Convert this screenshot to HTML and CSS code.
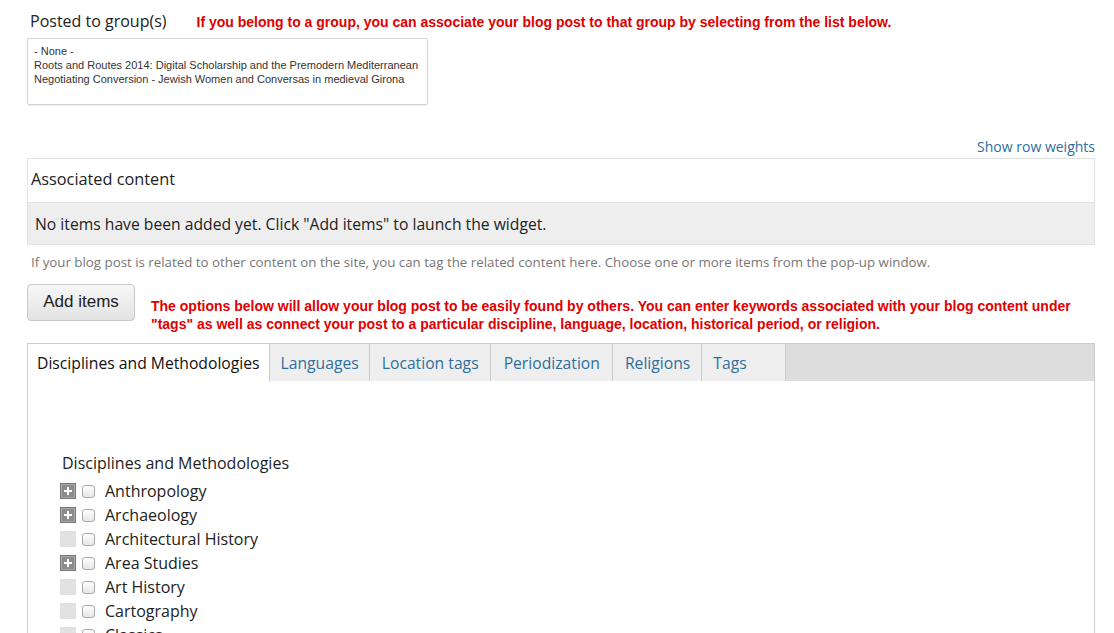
FILE: index.html
```html
<!DOCTYPE html>
<html lang="en">
<head>
    <meta charset="UTF-8">
    <title>Blog post</title>
    <link rel="stylesheet" href="styles.css">
</head>
<body>
    <div class="group-field">
        <div class="group-label">
            <label>Posted to group(s)</label>
            <span class="note">If you belong to a group, you can associate your blog post to that group by selecting from the list below.</span>
        </div>
        <div class="group-select">
            <div>- None -</div>
            <div>Roots and Routes 2014: Digital Scholarship and the Premodern Mediterranean</div>
            <div>Negotiating Conversion - Jewish Women and Conversas in medieval Girona</div>
        </div>
    </div>

    <div class="weights"><a href="#">Show row weights</a></div>

    <table class="assoc">
        <tr><th>Associated content</th></tr>
        <tr><td>No items have been added yet. Click "Add items" to launch the widget.</td></tr>
    </table>
    <div class="description">If your blog post is related to other content on the site, you can tag the related content here. Choose one or more items from the pop-up window.</div>

    <div class="add-row">
        <button class="btn">Add items</button>
        <p class="note">The options below will allow your blog post to be easily found by others. You can enter keywords associated with your blog content under "tags" as well as connect your post to a particular discipline, language, location, historical period, or religion.</p>
    </div>

    <div class="tabs">
        <ul class="tab-list">
            <li class="active">Disciplines and Methodologies</li>
            <li class="narrow">Languages</li>
            <li>Location tags</li>
            <li class="wide">Periodization</li>
            <li>Religions</li>
            <li class="last">Tags</li>
        </ul>
        <div class="tab-panel">
            <h3>Disciplines and Methodologies</h3>
            <ul class="tree">
                <li><span class="toggle plus"></span><input type="checkbox"><label>Anthropology</label></li>
                <li><span class="toggle plus"></span><input type="checkbox"><label>Archaeology</label></li>
                <li><span class="toggle"></span><input type="checkbox"><label>Architectural History</label></li>
                <li><span class="toggle plus"></span><input type="checkbox"><label>Area Studies</label></li>
                <li><span class="toggle"></span><input type="checkbox"><label>Art History</label></li>
                <li><span class="toggle"></span><input type="checkbox"><label>Cartography</label></li>
                <li><span class="toggle"></span><input type="checkbox"><label>Classics</label></li>
            </ul>
        </div>
    </div>
</body>
</html>
```

FILE: styles.css
```css
body {
    margin: 0;
    padding: 0 19px 0 27px;
    font-family: "Open Sans", sans-serif;
    font-size: 16px;
    color: #222;
    background: #fff;
    overflow: hidden;
}

.note {
    font-family: "Liberation Sans", Arial, sans-serif;
    font-weight: bold;
    color: #e00000;
    font-size: 14px;
}

/* groups */
.group-field {
    padding-top: 10px;
}
.group-label {
    display: flex;
    align-items: baseline;
    gap: 30px;
    padding-left: 3px;
    height: 28px;
}
.group-label label {
    font-size: 16px;
}
.group-select {
    width: 387px;
    height: 55px;
    padding: 5px 6px;
    border: 1px solid #d4d4d4;
    border-radius: 2px;
    box-shadow: 0 1px 1px rgba(0, 0, 0, 0.08);
    font-family: "Liberation Sans", Arial, sans-serif;
    font-size: 11px;
    line-height: 14px;
    color: #333;
}

.weights {
    text-align: right;
    margin-top: 32px;
    height: 21px;
    font-size: 14px;
}
.weights a {
    color: #2e6e9e;
    text-decoration: none;
}

/* associated content */
.assoc {
    width: 100%;
    border-collapse: collapse;
    border: 1px solid #e2e2e2;
}
.assoc th {
    text-align: left;
    font-weight: normal;
    font-size: 16.3px;
    height: 39px;
    padding: 0 3px 4px;
    border-bottom: 1px solid #e2e2e2;
}
.assoc td {
    background: #eee;
    font-size: 15.7px;
    height: 41px;
    padding: 0 7px;
}
.description {
    font-size: 13.3px;
    color: #777;
    padding: 8px 4px 0;
    height: 31px;
}

.add-row {
    display: flex;
    gap: 16px;
}
.btn {
    font-family: "Liberation Sans", Arial, sans-serif;
    font-size: 17px;
    width: 108px;
    height: 37px;
    border: 1px solid #c8c8c8;
    border-radius: 4px;
    background: linear-gradient(#f7f7f7, #e3e3e3);
    color: #222;
    padding: 0 0 1px;
    flex-shrink: 0;
}
.add-row .note {
    margin: 13px 0 0;
    max-width: 935px;
    line-height: 18px;
}

/* tabs */
.tabs {
    margin-top: 10px;
}
.tab-list {
    display: flex;
    list-style: none;
    margin: 0;
    padding: 0;
    background: #ddd;
    border: 1px solid #ccc;
    border-bottom: none;
    height: 37px;
}
.tab-list li {
    background: #eee;
    color: #2e6e9e;
    border-right: 1px solid #ccc;
    padding: 0 11px 0 12px;
    line-height: 38px;
    font-size: 15.7px;
}
.tab-list li.narrow {
    padding: 0 10px 0 11px;
}
.tab-list li.wide {
    padding: 0 12px 0 13px;
}
.tab-list li.active {
    background: #fff;
    color: #111;
    padding: 0 9px;
    height: 38px;
}
.tab-list li.last {
    padding: 0 38px 0 11px;
}
.tab-panel {
    border-left: 1px solid #ccc;
    border-right: 1px solid #ccc;
    padding: 71px 32px 0;
    height: 400px;
}
.tab-panel h3 {
    font-weight: normal;
    font-size: 16px;
    margin: 0 0 5px 2px;
}
.tree {
    list-style: none;
    margin: 0;
    padding: 0;
}
.tree li {
    display: flex;
    align-items: center;
    height: 24px;
}
.toggle {
    width: 16px;
    height: 16px;
    background: #e1e1e1;
    margin-right: 6px;
    position: relative;
}
.toggle.plus {
    background: #8c8c8c;
    box-shadow: inset 0 0 0 1px #777, inset 0 0 0 2px #aaa;
}
.toggle.plus::before,
.toggle.plus::after {
    content: "";
    position: absolute;
    background: #fff;
}
.toggle.plus::before {
    left: 4px;
    top: 7px;
    width: 8px;
    height: 2px;
}
.toggle.plus::after {
    left: 7px;
    top: 4px;
    width: 2px;
    height: 8px;
}
.tree input {
    appearance: none;
    margin: 0 10px 0 0;
    width: 13px;
    height: 13px;
    border: 1px solid #aaa;
    border-radius: 3px;
    background: linear-gradient(#fff, #e6e6e6);
}
```
